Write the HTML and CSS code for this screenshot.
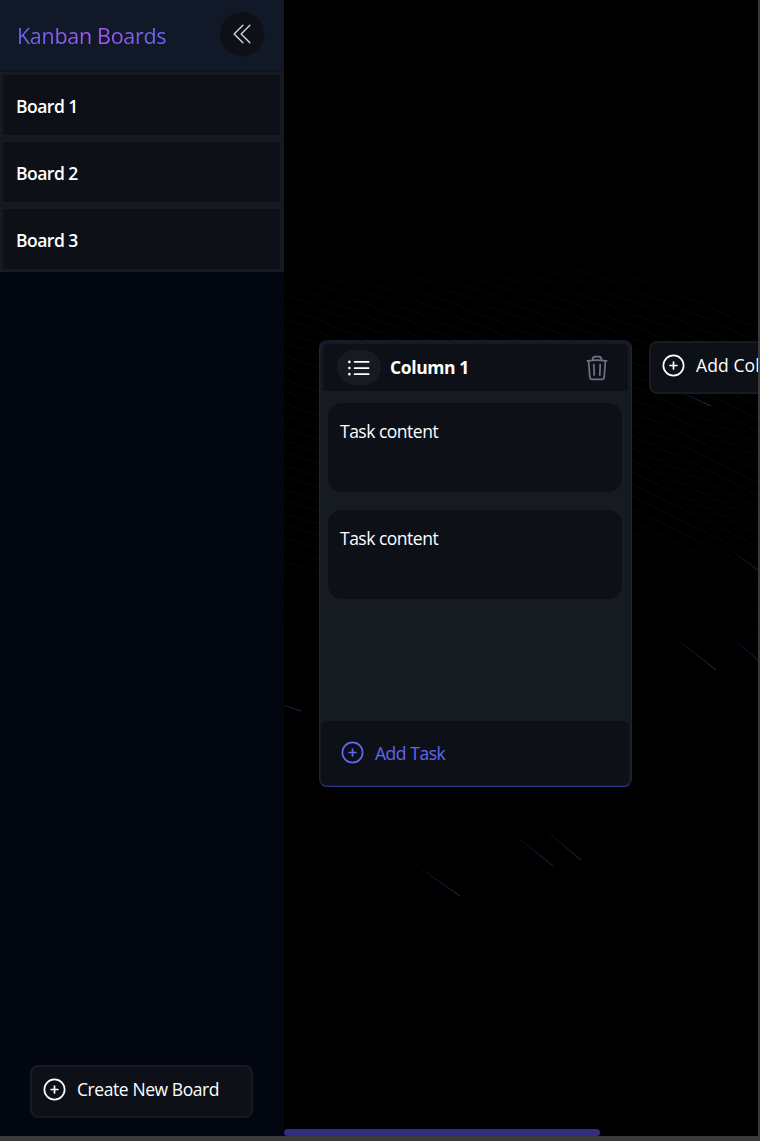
FILE: index.html
```html
<!DOCTYPE html>
<html lang="en">
<head>
<meta charset="utf-8">
<title>Kanban Boards</title>
<link rel="stylesheet" href="styles.css">
</head>
<body>
<svg class="defs" width="0" height="0" aria-hidden="true">
  <symbol id="plus-circle" viewBox="0 0 24 24"><path d="M12 9v6m3-3H9m12 0a9 9 0 1 1-18 0 9 9 0 0 1 18 0Z"/></symbol>
</svg>
<div class="app">
  <aside class="sidebar">
    <header class="sidebar-head">
      <h1 class="title">Kanban Boards</h1>
      <button class="collapse" aria-label="Collapse">
        <svg class="icon chevrons" viewBox="0 0 24 24"><path d="m18.75 4.5-7.5 7.5 7.5 7.5m-6-15L5.250 12l7.5 7.5"/></svg>
      </button>
    </header>
    <nav class="boards">
      <a class="board">Board 1</a>
      <a class="board">Board 2</a>
      <a class="board">Board 3</a>
    </nav>
    <button class="button create"><svg class="icon plus"><use href="#plus-circle"/></svg><span class="create-text">Create New Board</span></button>
  </aside>
  <main class="canvas">
    <svg class="beams" viewBox="284 0 474 1136" aria-hidden="true">
      <defs>
        <linearGradient id="beam"><stop offset="0" stop-color="#6344f5" stop-opacity="0"/><stop offset=".6" stop-color="#4a3ac0"/><stop offset="1" stop-color="#18a0b4"/></linearGradient>
        <linearGradient id="fade" x1="0" y1="0" x2="0" y2="1"><stop offset=".15" stop-color="#000"/><stop offset=".28" stop-color="#fff"/><stop offset=".46" stop-color="#fff"/><stop offset=".58" stop-color="#000"/></linearGradient>
        <mask id="fade-mask" maskUnits="userSpaceOnUse" x="284" y="0" width="474" height="1136"><rect x="284" width="474" height="1136" fill="url(#fade)"/></mask>
      </defs>
      <g id="waves" class="waves" mask="url(#fade-mask)"></g>
      <g class="streaks" stroke="url(#beam)">
        <path d="M676 390L711 406"/>
        <path d="M728 548L766 576"/>
        <path d="M670 634Q694 652 716 670"/>
        <path d="M731 637L766 667"/>
        <path d="M272 701L301 711"/>
        <path d="M414 864L460 896"/>
        <path d="M516 836L553 866"/>
        <path d="M543 828L581 860"/>
      </g>
    </svg>
    <div class="lanes">
      <section class="column">
        <header class="column-head">
          <span class="handle"><svg class="icon list" viewBox="0 0 24 24"><path d="M8.250 6.750h12M8.250 12h12m-12 5.250h12M3.750 6.750h.007v.008H3.750V6.750Zm.375 0a.375.375 0 1 1-.75 0 .375.375 0 0 1 .75 0ZM3.750 12h.007v.008H3.750V12Zm.375 0a.375.375 0 1 1-.75 0 .375.375 0 0 1 .75 0Zm-.375 5.250h.007v.008H3.750v-.008Zm.375 0a.375.375 0 1 1-.75 0 .375.375 0 0 1 .75 0Z"/></svg></span>
          <h2 class="column-title">Column 1</h2>
          <svg class="icon trash" viewBox="0 0 24 24"><path d="m14.740 9-.346 9m-4.788 0L9.260 9m9.968-3.210c.342.052.682.107 1.022.166m-1.022-.165L18.160 19.673a2.250 2.250 0 0 1-2.244 2.077H8.084a2.250 2.250 0 0 1-2.244-2.077L4.772 5.790m14.456 0a48.108 48.108 0 0 0-3.478-.397m-12 .562c.340-.059.680-.114 1.022-.165m0 0a48.110 48.110 0 0 1 3.478-.397m7.500 0v-.916c0-1.180-.910-2.164-2.090-2.201a51.964 51.964 0 0 0-3.320 0c-1.180.037-2.090 1.022-2.090 2.201v.916m7.500 0a48.667 48.667 0 0 0-7.500 0"/></svg>
        </header>
        <div class="tasks">
          <article class="task">Task content</article>
          <article class="task">Task content</article>
        </div>
        <button class="add-task"><svg class="icon plus"><use href="#plus-circle"/></svg><span class="add-text">Add Task</span></button>
      </section>
      <button class="button add-column"><svg class="icon plus"><use href="#plus-circle"/></svg><span class="add-column-text">Add Column</span></button>
    </div>
    <div class="scroll-thumb"></div>
  </main>
</div>
<script src="waves.js"></script>
</body>
</html>
```
FILE: styles.css
```css
* { box-sizing: border-box; }
body {
  margin: 0;
  height: 1141px;
  overflow: hidden;
  background: #3a3a3a;
  color: #fff;
  font: 17.5px/24px "Open Sans", "Noto Sans", sans-serif;
}
h1, h2 { margin: 0; }
button { border: 0; color: inherit; font: inherit; text-align: left; }
.defs { position: absolute; }
.icon { fill: none; stroke: currentColor; stroke-width: 1.5; stroke-linecap: round; stroke-linejoin: round; flex: none; }
.plus { width: 27px; height: 27px; }
.app { display: flex; width: 758px; height: 1136px; background: #000; }

.sidebar { display: flex; flex-direction: column; flex: none; width: 284px; background: #010611; }
.sidebar-head {
  display: flex;
  align-items: center;
  justify-content: space-between;
  height: 71px;
  padding: 0 19px 3px 17px;
  background: #111827;
}
.title {
  padding-top: 4px;
  font-size: 21.5px;
  line-height: 30px;
  font-weight: 500;
  letter-spacing: -.3px;
  color: transparent;
  background: linear-gradient(90deg, #6366f1, #a855f7, #6366f1);
  background-clip: text;
  -webkit-background-clip: text;
}
.collapse {
  display: grid;
  place-items: center;
  width: 46px;
  height: 46px;
  padding: 0;
  border: 1px solid #141920;
  border-radius: 50%;
  background: #0d1117;
}
.chevrons { width: 28px; height: 28px; color: #d4d4d4; stroke-width: 1.2; }
.boards { display: flex; flex-direction: column; gap: 1px; padding-top: 1px; background: #10141a; }
.board {
  height: 66px;
  padding: 19px 13px;
  border: 3px solid #161b22;
  border-right-width: 4px;
  background: #0d1117;
  font-size: 17.5px;
  font-weight: 600;
  letter-spacing: -.5px;
}
.button {
  display: flex;
  align-items: center;
  flex: none;
  height: 53px;
  padding: 0 8px 5px 9px;
  gap: 9px;
  border: 2px solid #161b22;
  border-radius: 8px;
  background: #0d1117;
  white-space: nowrap;
}
.create { width: 223px; margin: auto 0 18px 30px; }
.create-text { letter-spacing: -.42px; }

.canvas { position: relative; display: flex; flex-direction: column; width: 474px; padding-top: 340px; overflow: hidden; }
.beams { position: absolute; inset: 0; width: 474px; height: 1136px; }
.waves { fill: none; stroke: #09090a; stroke-width: 1; }
.streaks { fill: none; stroke-width: .8; opacity: .5; }
.lanes { position: relative; display: flex; align-items: flex-start; gap: 17px; padding-left: 35px; }
.column {
  display: flex;
  flex-direction: column;
  flex: none;
  width: 313px;
  height: 447px;
  padding: 3px 1px 1px;
  border: 1px solid #20214a;
  border-top-color: #181c2b;
  border-bottom-color: #34348c;
  border-radius: 8px;
  background: #161b22;
}
.column-head {
  display: flex;
  align-items: center;
  height: 47px;
  margin: 0 2px;
  padding: 0 17px 0 14px;
  border-radius: 4px 4px 0 0;
  background: #0d1117;
}
.handle { display: grid; place-items: center; width: 44px; height: 35px; border-radius: 18px; background: #161b22; }
.list { width: 28px; height: 28px; }
.column-title { margin: 0 0 2px 9px; font-size: 17.5px; line-height: 24px; font-weight: 700; letter-spacing: -.4px; }
.trash { width: 28px; height: 28px; margin-left: auto; color: #6b7280; }
.tasks { display: flex; flex: 1; flex-direction: column; gap: 18px; padding: 12px 8px 0 7px; }
.task { height: 89px; padding: 16px 12px; border-radius: 14px; background: #0d1117; letter-spacing: -.5px; }
.add-task {
  display: flex;
  align-items: center;
  gap: 9px;
  height: 64px;
  margin-right: 1px;
  padding: 0 18px 1px;
  border-radius: 6px;
  background: #0d1117;
  color: #6366f1;
}
.add-text { letter-spacing: -.45px; }
.add-column { width: 222px; margin-top: 1px; }
.add-column-text { letter-spacing: .1px; }
.scroll-thumb { position: relative; width: 316px; height: 7px; margin-top: auto; border-radius: 4px; background: #312e81; }
```
FILE: waves.js
```js
// Draws the faint family of curves behind the board lanes.
const waves = document.getElementById('waves');
for (let i = 0; i < 43; i++) {
  const t = i / 42;
  const y0 = 135 + 12.2 * i;
  const y1 = 277 + 12.2 * i;
  const y2 = 329 + 12.5 * i + 14 * t;
  const left = 0.52 - 0.3 * t;
  const mid = 0.36 + 0.3 * t;
  const right = 0.46 + 0.25 * t;
  const path = document.createElementNS('http://www.w3.org/2000/svg', 'path');
  path.setAttribute('d', `M284 ${y0}C400 ${y0 + 116 * left} 516 ${y1 - 116 * mid} 632 ${y1}C674 ${y1 + 42 * mid} 716 ${y2 - 42 * right} 758 ${y2}`);
  waves.appendChild(path);
}
```
